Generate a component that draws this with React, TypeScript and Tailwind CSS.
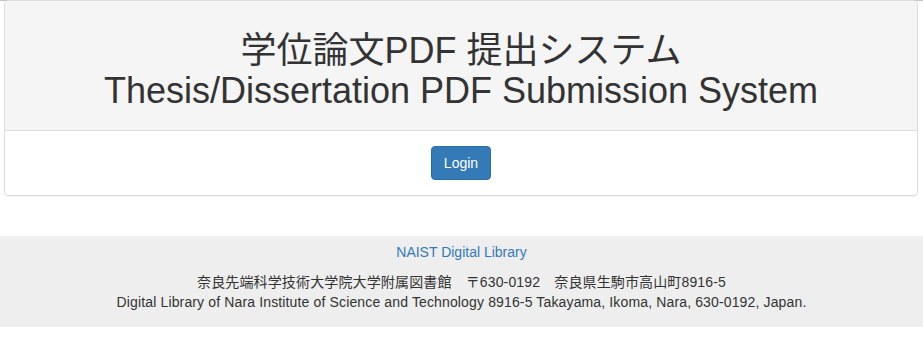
export default function App() {
  const font = { fontFamily: '"Liberation Sans", "Noto Sans CJK JP", Arial, sans-serif' };
  return (
    <div className="min-h-screen bg-white text-[#333] text-[14px] leading-[20px] border-t border-[#c4c4c4]" style={font}>
      <div className="px-[4px] pr-[5px]">
        <div className="border border-[#ddd] rounded-[4px] shadow-[0_1px_1px_rgba(0,0,0,0.05)] -mt-px">
          <div className="bg-[#f5f5f5] border-b border-[#ddd] rounded-t-[3px] px-[15px] pt-[10px] pb-[10px] text-center">
            <h1 className="mt-[20px] mb-[10px] text-[36px] leading-[39.6px] font-normal">
              学位論文PDF 提出システム
              <br />
              Thesis/Dissertation PDF Submission System
            </h1>
          </div>
          <div className="p-[15px] text-center">
            <button className="bg-[#337ab7] border border-[#2e6da4] text-white rounded-[4px] px-[12px] py-[6px] text-[14px] leading-[20px]">
              Login
            </button>
          </div>
        </div>
      </div>
      <footer className="mt-[40px] bg-[#eee] pt-[6px] pb-[15px] text-center">
        <p className="mb-[10px]">
          <a className="text-[#337ab7]">NAIST Digital Library</a>
        </p>
        <p className="tracking-[0.14px]">
          奈良先端科学技術大学院大学附属図書館　〒630-0192　奈良県生駒市高山町8916-5
          <br />
          Digital Library of Nara Institute of Science and Technology 8916-5 Takayama, Ikoma, Nara, 630-0192, Japan.
        </p>
      </footer>
    </div>
  );
}
